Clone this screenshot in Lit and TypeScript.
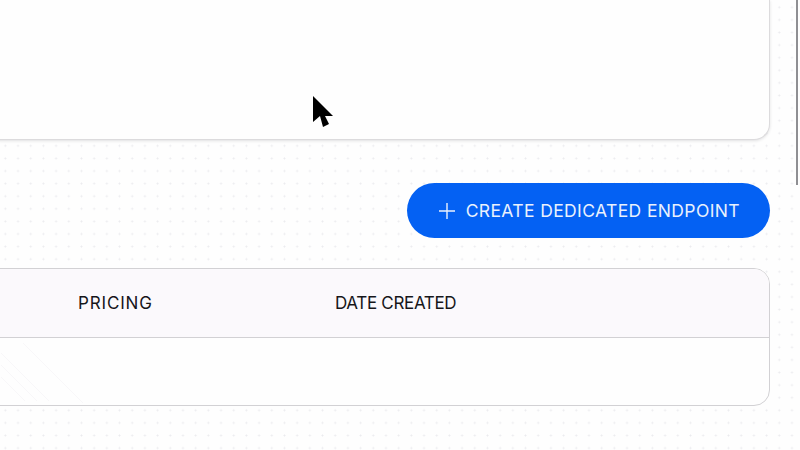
import { LitElement, css, html } from "lit";
import { customElement } from "lit/decorators.js";

@customElement("app-root")
export class AppRoot extends LitElement {
  static styles = css`
    :host {
      display: block;
      position: relative;
      width: 800px;
      height: 450px;
      overflow: hidden;
      background-color: #fefefe;
      background-image: radial-gradient(circle, #ebebee 0.8px, transparent 1.2px);
      background-size: 12.7px 12.6px;
      background-position: -1px 1px;
      font-family: Inter, "Liberation Sans", sans-serif;
      color: #16161a;
    }
    .page {
      display: flex;
      flex-direction: column;
      width: 786px;
      margin-left: -16px;
    }
    .panel {
      height: 140px;
      box-sizing: border-box;
      background: #fefefe;
      border: 1px solid #dcdbdd;
      border-top: none;
      border-radius: 0 0 16px 16px;
      box-shadow: 0 1px 3px rgba(40, 40, 50, 0.14);
    }
    .actions {
      display: flex;
      justify-content: flex-end;
      padding: 43px 0 30px;
    }
    .create {
      display: flex;
      align-items: center;
      gap: 10px;
      height: 55px;
      padding: 0 30px 0 31px;
      box-sizing: border-box;
      border: none;
      border-radius: 28px;
      background: #0461f3;
      color: #eaf1fd;
      font: inherit;
      font-size: 17.5px;
      letter-spacing: 0.38px;
      white-space: nowrap;
    }
    .create svg {
      display: block;
    }
    .table {
      position: relative;
      height: 138px;
      box-sizing: border-box;
      border: 1px solid #d2d1d4;
      border-radius: 16px;
      background: #fefefe;
      overflow: hidden;
    }
    .head {
      display: grid;
      grid-template-columns: 257px 1fr;
      align-items: center;
      height: 69px;
      padding-left: 93px;
      box-sizing: border-box;
      background: #fbf9fc;
      border-bottom: 1px solid #d2d1d4;
      font-size: 17px;
    }
    .pricing {
      letter-spacing: 0.85px;
    }
    .date {
      letter-spacing: -0.33px;
    }
    .texture {
      position: absolute;
      left: 16px;
      top: 0;
    }
    .cursor {
      position: absolute;
      left: 312px;
      top: 95px;
    }
    .scrollbar {
      position: absolute;
      left: 796px;
      top: 0;
      width: 2px;
      height: 185px;
      background: #8f8f93;
    }
  `;

  render() {
    return html`
      <div class="page">
        <div class="panel"></div>
        <div class="actions">
          <button class="create">
            <svg width="18" height="18" viewBox="0 0 18 18" fill="none" stroke="#eaf1fd" stroke-width="1.4">
              <path d="M9 1v16M1 9h16" />
            </svg>
            CREATE DEDICATED ENDPOINT
          </button>
        </div>
        <div class="table">
          <div class="head">
            <span class="pricing">PRICING</span>
            <span class="date">DATE CREATED</span>
          </div>
          <svg class="texture" width="120" height="137" viewBox="0 0 120 137" fill="none" stroke="#f8f7f9">
            <path d="M0 84l48 48M0 96l36 36M0 108l24 24M22 74l60 60" />
          </svg>
        </div>
      </div>
      <svg class="cursor" width="24" height="34" viewBox="0 0 24 34">
        <path d="M1 1V27L8 21L11 32L17 29L13 21H21Z" fill="#000" />
      </svg>
      <div class="scrollbar"></div>
    `;
  }
}
